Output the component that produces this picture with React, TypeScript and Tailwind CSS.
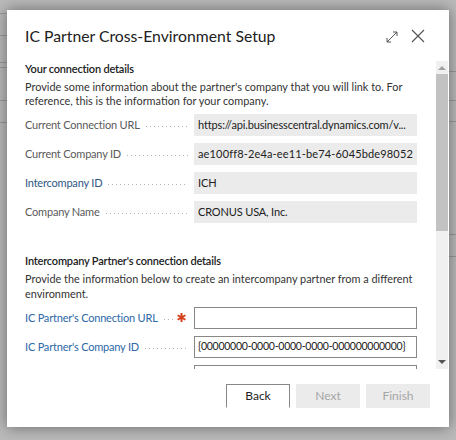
import React from "react";

const font = { fontFamily: 'Lato, "Open Sans", sans-serif' };

type Row = { label: string; value: string; blue?: boolean; valueClass?: string };

const ownRows: Row[] = [
  { label: "Current Connection URL", value: "https://api.businesscentral.dynamics.com/v..." },
  { label: "Current Company ID", value: "ae100ff8-2e4a-ee11-be74-6045bde98052", valueClass: "tracking-[0.15px]" },
  { label: "Intercompany ID", value: "ICH", blue: true },
  { label: "Company Name", value: "CRONUS USA, Inc." },
];

function Leader({ className = "mx-[6px]" }: { className?: string }) {
  return (
    <span
      className={`${className} mt-[3px] h-[1px] flex-1 bg-[linear-gradient(to_right,#b4b4b4_1px,transparent_1px)] bg-[length:4px_1px]`}
    />
  );
}

function Asterisk() {
  return (
    <svg width="9" height="9" viewBox="0 0 9 9" className="ml-[4px] mr-[8px] mb-[2px]" stroke="#d4401c" strokeWidth="2">
      <path d="M4.5 0 V9 M0.6 2.25 L8.4 6.75 M0.6 6.75 L8.4 2.25" />
    </svg>
  );
}

function ReadRow({ row }: { row: Row }) {
  return (
    <div className="flex h-[22px] items-center">
      <div className="flex w-[169px] items-center">
        <span className={`whitespace-nowrap text-[11px] tracking-[-0.2px] ${row.blue ? "text-[#2f5784]" : "text-[#5a5a5a]"}`}>
          {row.label}
        </span>
        <Leader />
      </div>
      <div
        className={`flex h-[22px] w-[223px] items-center overflow-hidden whitespace-nowrap bg-[#ebebeb] px-[4px] text-[11px] text-[#212121] ${
          row.valueClass ?? "tracking-[-0.15px]"
        }`}
      >
        {row.value}
      </div>
    </div>
  );
}

function InputRow({ label, value, required }: { label: string; value?: string; required?: boolean }) {
  return (
    <div className="flex h-[22px] items-center">
      <div className="flex w-[169px] items-center">
        <span className="whitespace-nowrap text-[11px] tracking-[-0.2px] text-[#2d68a8]">{label}</span>
        {required ? (
          <>
            <Leader className="ml-[6px]" />
            <Asterisk />
          </>
        ) : (
          <Leader />
        )}
      </div>
      <div className="flex h-[22px] w-[223px] items-center overflow-hidden whitespace-nowrap border border-[#8a8886] bg-white px-[3px] text-[10.5px] tracking-[-0.25px] text-[#212121]">
        {value}
      </div>
    </div>
  );
}

export default function App() {
  return (
    <div className="relative h-[440px] w-[456px] overflow-hidden bg-[#bababa] pl-[7px] pt-[10px]" style={font}>
      {/* page behind the dialog */}
      <div className="absolute left-0 top-[13px] h-[1px] w-[7px] bg-[#9a9a9a]" />
      <div className="absolute left-0 top-[35px] h-[1px] w-[7px] bg-[#9a9a9a]" />
      <div className="absolute left-0 top-[62px] h-[1px] w-[7px] bg-[#9a9a9a]" />
      <div className="absolute left-0 top-[67px] h-[1px] w-[7px] bg-[#9a9a9a]" />
      <div className="absolute left-0 top-[100px] h-[1px] w-[7px] bg-[#9a9a9a]" />
      <div className="absolute left-0 top-[122px] h-[1px] w-[7px] bg-[#9a9a9a]" />
      <div className="absolute right-0 top-[71px] h-[1px] w-[7px] bg-[#9a9a9a]" />
      <div className="absolute right-0 top-[100px] h-[1px] w-[7px] bg-[#9a9a9a]" />
      <div className="absolute right-0 top-[121px] h-[1px] w-[7px] bg-[#9a9a9a]" />
      <div className="absolute right-0 top-[234px] h-[1px] w-[7px] bg-[#9a9a9a]" />
      <div className="absolute right-0 top-[256px] h-[1px] w-[7px] bg-[#9a9a9a]" />

      <div className="relative flex h-[417px] w-[442px] flex-col bg-white shadow-[0_0_14px_rgba(0,0,0,0.45)]">
        {/* header */}
        <div className="flex h-[51px] items-center pl-[18px] pr-[24px]">
          <h1 className="flex-1 pt-[1px] text-[15.75px] text-[#212121]">IC Partner Cross-Environment Setup</h1>
          <svg width="12" height="12" viewBox="0 0 12 12" className="mr-[13px] mt-[2px]" fill="none" stroke="#555" strokeWidth="1">
            <path d="M1 11 L11 1 M7 1 H11 V5 M1 7 V11 H5" />
          </svg>
          <svg width="14" height="14" viewBox="0 0 14 14" fill="none" stroke="#555" strokeWidth="1.2">
            <path d="M1 1 L13 13 M13 1 L1 13" />
          </svg>
        </div>

        {/* body */}
        <div className="flex h-[308px]">
          <div className="flex-1 overflow-hidden pl-[18px] pr-[8px] text-[10.9px]">
            <div className="text-[11px] leading-[15px] font-semibold tracking-[-0.2px] text-[#212121]">Your connection details</div>
            <p className="mt-[4px] leading-[14px] text-[#333]">
              Provide some information about the partner's company that you will link to. For reference, this is the information for your company.
            </p>
            <div className="mt-[6px] flex flex-col gap-[7px]">
              {ownRows.map((r) => (
                <ReadRow key={r.label} row={r} />
              ))}
            </div>

            <div className="mt-[30px] text-[11px] leading-[15px] font-semibold tracking-[-0.2px] text-[#212121]">
              Intercompany Partner's connection details
            </div>
            <p className="mt-[3px] leading-[15px] text-[#333]">
              Provide the information below to create an intercompany partner from a different environment.
            </p>
            <div className="mt-[6px] flex flex-col gap-[7px]">
              <InputRow label="IC Partner's Connection URL" required />
              <InputRow label="IC Partner's Company ID" value="{00000000-0000-0000-0000-000000000000}" />
              <InputRow label="" required />
            </div>
          </div>

          {/* scrollbar */}
          <div className="mr-[1px] flex w-[12px] flex-col bg-[#f0f0f0]">
            <div className="flex h-[13px] items-center justify-center">
              <span className="h-0 w-0 border-x-[4px] border-b-[4px] border-x-transparent border-b-[#a0a0a0]" />
            </div>
            <div className="h-[157px] bg-[#c2c2c2]" />
            <div className="flex-1" />
            <div className="flex h-[14px] items-center justify-center">
              <span className="h-0 w-0 border-x-[4px] border-t-[4px] border-x-transparent border-t-[#555]" />
            </div>
          </div>
        </div>

        {/* footer */}
        <div className="flex justify-end gap-[6px] pr-[19px] pt-[15px] text-[12px]">
          <button className="h-[24px] w-[64px] border border-[#8a8886] border-b-transparent bg-white text-[#212121]">Back</button>
          <button className="h-[24px] w-[64px] bg-[#ebebeb] text-[#a6a6a6]">Next</button>
          <button className="h-[24px] w-[64px] bg-[#ebebeb] text-[#a6a6a6]">Finish</button>
        </div>
      </div>
    </div>
  );
}
